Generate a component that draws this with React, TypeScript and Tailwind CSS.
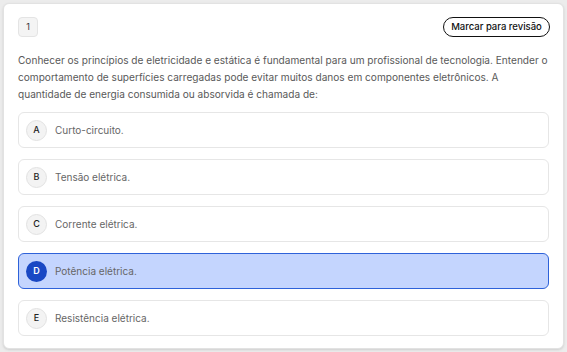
const options = [
  { letter: 'A', text: 'Curto-circuito.' },
  { letter: 'B', text: 'Tensão elétrica.' },
  { letter: 'C', text: 'Corrente elétrica.' },
  { letter: 'D', text: 'Potência elétrica.', selected: true },
  { letter: 'E', text: 'Resistência elétrica.' },
];

export default function App() {
  return (
    <div className="w-[567px] h-[352px] bg-[#ececec] p-[3px] font-['Inter',sans-serif]">
      <div className="h-full bg-white rounded-md border border-[#e2e2e2] shadow-sm px-[14px] pt-[13px]">
        <div className="flex items-start justify-between">
          <div className="w-5 h-5 rounded-[4px] bg-[#f4f4f4] border border-[#e4e4e4] flex items-center justify-center text-[9px] text-[#333]">
            1
          </div>
          <button className="h-[20px] w-[107px] rounded-full border-[1.5px] border-[#111] text-[9.5px] font-medium text-[#111] mr-[-1px]">
            Marcar para revisão
          </button>
        </div>

        <p className="mt-[15px] text-[10.1px] leading-[17px] text-[#595959] whitespace-nowrap">
          Conhecer os princípios de eletricidade e estática é fundamental para um profissional de tecnologia. Entender o
          <br />
          comportamento de superfícies carregadas pode evitar muitos danos em componentes eletrônicos. A
          <br />
          quantidade de energia consumida ou absorvida é chamada de:
        </p>

        <div className="mt-[9px] flex flex-col gap-[11px]">
          {options.map((o) => (
            <div
              key={o.letter}
              className={
                o.selected
                  ? 'h-[36px] rounded-md border-[1.5px] border-[#2e62d9] bg-[#c4d5fe] flex items-center pl-[7px] gap-[8px]'
                  : 'h-[36px] rounded-md border border-[#e6e6e6] bg-white flex items-center pl-[7px] gap-[8px]'
              }
            >
              <span
                className={
                  o.selected
                    ? 'w-[21px] h-[21px] rounded-full bg-[#1948c4] text-white text-[9px] font-semibold flex items-center justify-center'
                    : 'w-[21px] h-[21px] rounded-full bg-[#f3f3f3] border border-[#e2e2e2] text-[#222] text-[9px] font-medium flex items-center justify-center'
                }
              >
                {o.letter}
              </span>
              <span className="text-[10px] text-[#666]">{o.text}</span>
            </div>
          ))}
        </div>
      </div>
    </div>
  );
}
